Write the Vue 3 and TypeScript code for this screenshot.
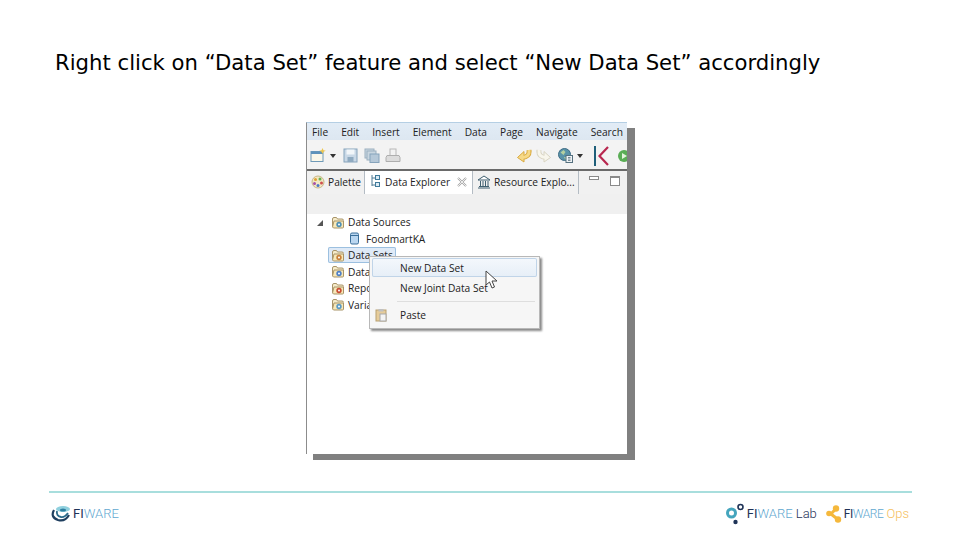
<template>
  <div class="slide">
    <h1 class="title">Right click on “Data Set” feature and select “New Data Set” accordingly</h1>

    <div class="figure">
      <div class="shot">
        <div class="menubar">
          <span v-for="item in menuItems" :key="item">{{ item }}</span>
        </div>

        <div class="toolbar">
          <svg class="tool" width="16" height="15" viewBox="0 0 16 15">
            <rect x="1" y="3.500" width="12" height="10" fill="#fbf8ea" stroke="#6f9ab8" />
            <rect x="1" y="3.500" width="12" height="2.500" fill="#5f93bb" />
            <path d="M12.500 0l1 2.200 2.300.6-2.300 1-1 2.200-1-2.200-2.300-1 2.300-.6z" fill="#eec64e" />
          </svg>
          <span class="caret caret-a"></span>
          <svg class="tool save" width="15" height="15" viewBox="0 0 15 15">
            <rect x="1" y="1" width="13" height="13" fill="#c9d8e6" stroke="#86a3bb" />
            <rect x="3.500" y="1.500" width="8" height="5" fill="#f2f6f9" />
            <rect x="4.500" y="9" width="6" height="5" fill="#8faac0" />
          </svg>
          <svg class="tool copy" width="16" height="15" viewBox="0 0 16 15">
            <rect x="1" y="1" width="9" height="9" fill="#c9d6e0" stroke="#9bb0c0" />
            <rect x="3" y="3" width="9" height="9" fill="#c9d6e0" stroke="#9bb0c0" />
            <rect x="6" y="6" width="9" height="8.500" fill="#b5c8d8" stroke="#86a3bb" />
          </svg>
          <svg class="tool" width="16" height="15" viewBox="0 0 16 15">
            <rect x="5" y="1" width="6" height="6.500" fill="#f2f2f2" stroke="#b8b8b8" />
            <path d="M2 7.500h12l1 2v4H1v-4z" fill="#dcdcdc" stroke="#aeaeae" />
          </svg>
          <span class="tool-spacer"></span>
          <svg class="tool" width="16" height="15" viewBox="0 0 16 15">
            <path d="M13 2Q14 9 6 9.500" fill="none" stroke="#d9a93f" stroke-width="5" />
            <path d="M8 3.500L1.500 9.500 8 14z" fill="#f6d987" stroke="#d9a93f" />
            <path d="M13 2Q14 9 6 9.500" fill="none" stroke="#f6d987" stroke-width="3" />
          </svg>
          <svg class="tool redo" width="16" height="15" viewBox="0 0 16 15">
            <path d="M3 2Q2 9 10 9.500" fill="none" stroke="#d8d4c2" stroke-width="5" />
            <path d="M8 3.500L14.500 9.500 8 14z" fill="#f8f6ec" stroke="#d8d4c2" />
            <path d="M3 2Q2 9 10 9.500" fill="none" stroke="#f8f6ec" stroke-width="3" />
          </svg>
          <svg class="tool globe" width="15" height="15" viewBox="0 0 15 15">
            <circle cx="6.500" cy="6.500" r="6" fill="#5a93a8" stroke="#3d6b85" />
            <path d="M2.500 4.500l3-2.500 2 2-2 3zM6 9l2.500 0-1 3z" fill="#b4d0a0" />
            <rect x="8" y="7.500" width="6.500" height="7" fill="#eef2f4" stroke="#55707f" />
            <path d="M10 9.500h2.500M10 11h2.500M10 12.500h2.500" stroke="#55707f" stroke-width=".8" />
          </svg>
          <span class="caret caret-b"></span>
          <span class="k-bar"></span>
          <svg class="tool k" width="12" height="20" viewBox="0 0 12 20">
            <path d="M11 1L2.500 10 11 19" fill="none" stroke="#b8274f" stroke-width="2.200" />
          </svg>
          <svg class="tool run" width="12" height="14" viewBox="0 0 12 14">
            <circle cx="6" cy="7" r="6" fill="#5aad55" />
            <path d="M4 4l5 3-5 3z" fill="#e4f4dc" />
          </svg>
        </div>

        <div class="tabs">
          <div class="tab">
            <svg width="14" height="14" viewBox="0 0 14 14">
              <circle cx="7" cy="7" r="6" fill="#f2e8c4" stroke="#c8b888" />
              <circle cx="4.500" cy="4.500" r="1.500" fill="#e0a030" />
              <circle cx="9" cy="4" r="1.500" fill="#68b050" />
              <circle cx="10.500" cy="8" r="1.500" fill="#d05050" />
              <circle cx="7" cy="10.500" r="1.500" fill="#4a78c8" />
              <circle cx="3.500" cy="8.500" r="1.500" fill="#a850a8" />
            </svg>
            <span>Palette</span>
          </div>
          <div class="tab active">
            <svg width="11" height="15" viewBox="0 0 11 15">
              <path d="M2 1v11M2 4h4M2 11h4" fill="none" stroke="#4e7a94" />
              <rect x="5.500" y="1.500" width="4" height="4" fill="#dcebf5" stroke="#3f7a9a" />
              <rect x="5.500" y="8.500" width="4" height="4" fill="#dcebf5" stroke="#3f7a9a" />
            </svg>
            <span>Data Explorer</span>
            <svg class="close" width="10" height="10" viewBox="0 0 10 10">
              <path d="M1 1l8 8M9 1L1 9" stroke="#a4a4a4" stroke-width="2" />
              <path d="M1 1l8 8M9 1L1 9" stroke="#fff" stroke-width=".8" />
            </svg>
          </div>
          <div class="tab">
            <svg width="14" height="14" viewBox="0 0 14 14">
              <path d="M1 5l6-4 6 4zM1 13h12M2 11.500h10" fill="#fff" stroke="#3f5f70" />
              <path d="M3.500 6v5M6 6v5M8.500 6v5M11 6v5" stroke="#3f5f70" />
            </svg>
            <span>Resource Explo...</span>
          </div>
          <div class="view-controls">
            <span class="minimize"></span>
            <span class="maximize"></span>
          </div>
        </div>

        <div class="band"></div>

        <ul class="tree">
          <li v-for="node in nodes" :key="node.label" :class="['node', node.cls]">
            <span v-if="node.arrow" class="arrow"></span>
            <span class="node-inner" :class="{ selected: node.selected }">
              <svg v-if="node.cls === 'leaf'" width="11" height="13" viewBox="0 0 11 13">
                <rect x="1.500" y="1" width="8" height="11" rx="1.500" fill="#b9d6f0" stroke="#3a6f9a" />
                <path d="M1.500 3.500h8" stroke="#3a6f9a" />
              </svg>
              <svg v-else width="14" height="13" viewBox="0 0 14 13">
                <path d="M1.500 10V3q0-1.500 1.500-1.500h2.500l1 1.500h4.500q1.500 0 1.500 1.500" fill="#f6eccb" stroke="#a89468" />
                <path d="M1.500 11L3 5h9.500v6q0 1-1 1H2.500z" fill="#f8e8b8" stroke="#a89468" />
                <circle cx="8" cy="8.500" r="2.700" :fill="node.badge" />
                <circle cx="8" cy="8.500" r="1" fill="#fff" />
              </svg>
              <span>{{ node.label }}</span>
            </span>
          </li>
        </ul>

        <!-- context menu sits over the tree -->
        <div class="context-menu">
          <div class="menu-row hover">New Data Set</div>
          <div class="menu-row">New Joint Data Set</div>
          <div class="menu-divider"></div>
          <div class="menu-row paste">
            <svg width="12" height="14" viewBox="0 0 12 14">
              <rect x="1" y="2" width="10" height="11" fill="#e6cc9a" stroke="#b8a070" />
              <rect x="5" y="6" width="6" height="7" fill="#f4f4f4" stroke="#a8a8a8" />
              <rect x="3.500" y="1" width="5" height="2.500" fill="#c0c0c0" />
            </svg>
            <span>Paste</span>
          </div>
          <svg class="cursor" width="14" height="20" viewBox="0 0 14 20">
            <path d="M1 1v14l3.500-3 2.500 6 2.500-1-2.500-6h5z" fill="#fff" stroke="#444" stroke-width="1" />
          </svg>
        </div>
      </div>
    </div>

    <footer class="footer">
      <div class="brand">
        <svg width="20" height="17" viewBox="0 0 20 17">
          <path d="M3 5Q-1 12 7 15 14 17 18 10" fill="none" stroke="#1f3f5f" stroke-width="2.200" />
          <path d="M6 6Q5 11 10 12 14 12.500 17 8" fill="none" stroke="#2a6a8a" stroke-width="1.800" />
          <ellipse cx="12" cy="4" rx="7" ry="3" fill="#8fd0de" />
          <ellipse cx="12" cy="5" rx="3" ry="1.600" fill="#2f7fa0" />
        </svg>
        <span class="wordmark"><b>FI</b><i>WARE</i></span>
      </div>

      <div class="partners">
        <div class="brand lab-brand">
          <svg width="18" height="22" viewBox="0 0 18 22">
            <circle cx="5.500" cy="10" r="4" fill="none" stroke="#45a5bd" stroke-width="3" />
            <circle cx="14.500" cy="4" r="2.500" fill="none" stroke="#1f3357" stroke-width="1.600" />
            <circle cx="9.500" cy="19" r="2.200" fill="#1f3357" />
          </svg>
          <span class="wordmark"><b>FI</b><i>WARE</i> <em class="lab">Lab</em></span>
        </div>
        <div class="brand">
          <svg width="16" height="18" viewBox="0 0 16 18">
            <path d="M10 3.500L5 9l7 5.500" fill="none" stroke="#f5b83c" stroke-width="3" />
            <circle cx="10" cy="3.500" r="3.200" fill="#f5b83c" />
            <circle cx="3" cy="8.500" r="2.800" fill="#f5b83c" />
            <circle cx="12" cy="14.500" r="3.200" fill="#f5b83c" />
          </svg>
          <span class="wordmark small"><b>FI</b><i>WARE</i> <em class="ops">Ops</em></span>
        </div>
      </div>
    </footer>
  </div>
</template>

<script setup lang="ts">
interface TreeNode {
  label: string
  cls: string
  badge?: string
  arrow?: boolean
  selected?: boolean
}

const menuItems = ['File', 'Edit', 'Insert', 'Element', 'Data', 'Page', 'Navigate', 'Search']

const nodes: TreeNode[] = [
  { label: 'Data Sources', cls: 'root', badge: '#4d8fb5', arrow: true },
  { label: 'FoodmartKA', cls: 'leaf' },
  { label: 'Data Sets', cls: 'root', badge: '#c8803a', selected: true },
  { label: 'Data Cubes', cls: 'root', badge: '#4d7fc5' },
  { label: 'Reports', cls: 'root', badge: '#c84a30' },
  { label: 'Variables', cls: 'root', badge: '#5a9ac5' }
]
</script>

<style>
html,
body {
  margin: 0;
  background: #fff;
}
</style>

<style scoped>
.slide {
  width: 960px;
  height: 540px;
  display: flex;
  flex-direction: column;
  overflow: hidden;
  background: #fff;
}

.title {
  margin: 0;
  padding: 49px 0 0 55px;
  font-family: "DejaVu Sans", sans-serif;
  font-size: 21.2px;
  line-height: 28px;
  font-weight: 400;
  color: #000;
  white-space: nowrap;
}

.figure {
  flex: 1;
  padding: 45px 0 0 306px;
}

.shot {
  position: relative;
  width: 321px;
  height: 332px;
  box-sizing: border-box;
  background: #fff;
  border-left: 1px solid #8c8c8c;
  border-top: 1px solid #b5cfe4;
  box-shadow: 8px 6px 0 #808080, 7px 6px 0 #808080;
  font-family: "Open Sans", sans-serif;
  font-size: 10.2px;
  color: #222;
}

.menubar {
  height: 17px;
  display: flex;
  align-items: center;
  gap: 13px;
  padding-left: 5px;
  background: linear-gradient(#e2ecf6, #dde7f1);
  white-space: nowrap;
  overflow: hidden;
}

.toolbar {
  height: 27px;
  display: flex;
  align-items: center;
  padding: 2px 0 0 3px;
  background: #f3f3f3;
  border-bottom: 2px solid #6a6a6a;
  overflow: hidden;
}

.tool {
  flex: none;
}

.save {
  margin: 0 6px 0 5px;
}

.copy {
  margin-right: 5px;
}

.tool-spacer {
  flex: none;
  width: 115px;
}

.redo {
  margin-left: 4px;
}

.globe {
  margin-left: 6px;
}

.caret {
  flex: none;
  width: 0;
  height: 0;
  border-left: 3.500px solid transparent;
  border-right: 3.500px solid transparent;
  border-top: 4px solid #333;
}

.caret-a {
  margin-left: 4px;
  margin-right: 2px;
}

.caret-b {
  margin-left: 4px;
}

.k-bar {
  flex: none;
  width: 2px;
  height: 20px;
  margin-left: 11px;
  background: #1f5f7a;
}

.k {
  margin-left: 1px;
}

.run {
  margin-left: 9px;
}

.tabs {
  height: 23px;
  display: flex;
  background: #f1f1f1;
  align-items: stretch;
}

.tab {
  display: flex;
  align-items: center;
  gap: 3px;
  padding: 0 3px 2px 4px;
  white-space: nowrap;
  border-right: 1px solid #b4bcc4;
}

.tab.active {
  background: #fff;
  gap: 4px;
  padding: 0 5px 2px;
}

.close {
  margin-left: 3px;
}

.view-controls {
  display: flex;
  gap: 11px;
  padding: 5px 0 0 10px;
}

.minimize {
  width: 8px;
  height: 2px;
  border: 1px solid #8a8a8a;
  background: #fff;
}

.maximize {
  width: 8px;
  height: 7px;
  border: 1px solid #8a8a8a;
  border-top-width: 2px;
  background: #fff;
}

.band {
  height: 20px;
  background: #f0f0f0;
}

.tree {
  list-style: none;
  margin: 0;
  padding: 0 0 0 24px;
}

.node {
  position: relative;
  height: 16.500px;
  display: flex;
  align-items: center;
  white-space: nowrap;
}

.node.leaf {
  padding-left: 18px;
}

.node-inner {
  display: flex;
  align-items: center;
  gap: 3px;
  padding: 1px 3px;
  margin-left: -3px;
  border-radius: 2px;
}

.leaf .node-inner {
  gap: 6px;
}

.node-inner.selected {
  background: #dfeaf7;
  box-shadow: inset 0 0 0 1px #9cc0e0;
}

.arrow {
  position: absolute;
  left: -14px;
  top: 6px;
  width: 0;
  height: 0;
  border-left: 6px solid transparent;
  border-bottom: 6px solid #555;
}

.context-menu {
  position: absolute;
  left: 62px;
  top: 133px;
  width: 171px;
  height: 73px;
  box-sizing: border-box;
  padding: 1px 2px;
  background: #f6f6f6;
  border: 1px solid #b8b8b8;
  box-shadow: 2px 2px 2px #8a8a8a;
  color: #222;
}

.menu-row {
  height: 19px;
  display: flex;
  align-items: center;
  padding-left: 28px;
  white-space: nowrap;
}

.menu-row.hover {
  background: linear-gradient(#f4f8fc, #e6eef7);
  box-shadow: inset 0 0 0 1px #c0d4e8;
  border-radius: 2px;
  margin-bottom: 1px;
}

.menu-divider {
  height: 1px;
  margin: 4px 2px 3px 25px;
  background: #dedede;
}

.menu-row.paste {
  padding-left: 3px;
  gap: 13px;
}

.cursor {
  position: absolute;
  left: 115px;
  top: 13px;
}

.footer {
  flex: none;
  height: 41px;
  margin: 0 48px 0 49px;
  padding: 0 3px 6px 2px;
  border-top: 2px solid #a8dedd;
  display: flex;
  align-items: center;
  justify-content: space-between;
}

.partners {
  display: flex;
  gap: 9px;
}

.brand {
  display: flex;
  align-items: center;
  gap: 2px;
}

.lab-brand {
  gap: 3px;
}

.wordmark {
  font-family: Roboto, sans-serif;
  font-size: 13px;
  font-weight: 300;
  white-space: nowrap;
}

.wordmark b {
  font-weight: 400;
  color: #1f3357;
}

.wordmark i {
  font-style: normal;
  color: #5fa8d0;
}

.wordmark em {
  font-style: normal;
}

.small b,
.small i {
  font-size: 12px;
  letter-spacing: -0.5px;
}

.lab {
  color: #1f3357;
}

.ops {
  color: #f5c060;
}
</style>
